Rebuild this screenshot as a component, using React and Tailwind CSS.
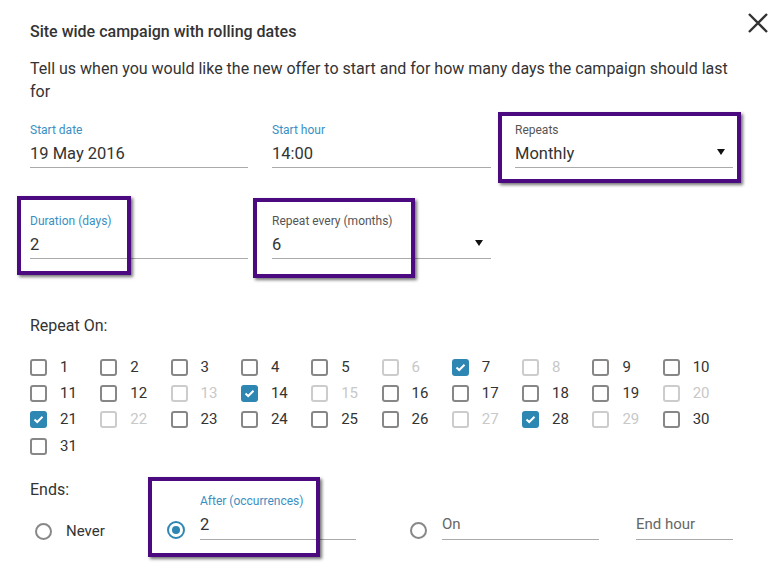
import React from "react";

const font = { fontFamily: "Roboto, 'Liberation Sans', sans-serif" };

// caja morada de anotación
function Marca({ className }) {
  return (
    <div
      className={`absolute border-4 border-[#4b0a80] shadow-[2px_2px_3px_rgba(0,0,0,0.55)] pointer-events-none ${className}`}
    />
  );
}

function Triangulo() {
  return (
    <svg width="8" height="6" viewBox="0 0 8 6" className="absolute right-[8px] top-[27px]">
      <path d="M0 0 H8 L4 6 Z" fill="#111" />
    </svg>
  );
}

function Campo({ label, valor, azul, select, className = "" }) {
  return (
    <div className={`relative shrink-0 ${className}`}>
      <div className={`text-[12px] leading-4 ${azul ? "text-[#3a8fc2]" : "text-[#555]"}`}>
        {label}
      </div>
      <div className="mt-[5px] text-[16.5px] leading-[22px] pb-[2px] text-[#333] border-b border-[#aaa]">
        {valor}
      </div>
      {select && <Triangulo />}
    </div>
  );
}

function Check({ n, estado }) {
  const off = estado === "off";
  const on = estado === "on";
  return (
    <div className="flex items-center h-[26.3px]">
      {on ? (
        <div className="w-[17px] h-[17px] rounded-[3px] bg-[#2e86b2] flex items-center justify-center">
          <svg width="11" height="9" viewBox="0 0 11 9">
            <path d="M1.5 4.5 L4.2 7 L9.5 1.8" stroke="white" strokeWidth="2" fill="none" />
          </svg>
        </div>
      ) : (
        <div className={`w-[17px] h-[17px] rounded-[3px] border-2 ${off ? "border-[#ccc]" : "border-[#878787]"}`} />
      )}
      <span className={`ml-[13px] text-[15px] ${off ? "text-[#c8c8c8]" : "text-[#333]"}`}>{n}</span>
    </div>
  );
}

function Radio({ activo }) {
  return activo ? (
    <div className="w-[18px] h-[18px] rounded-full border-2 border-[#2e86b2] flex items-center justify-center shrink-0">
      <div className="w-[8px] h-[8px] rounded-full bg-[#2e86b2]" />
    </div>
  ) : (
    <div className="w-[17px] h-[17px] rounded-full border-2 border-[#888] shrink-0" />
  );
}

const desactivados = [6, 8, 13, 15, 20, 22, 27, 29];
const marcados = [7, 14, 21, 28];

export default function App() {
  const dias = Array.from({ length: 31 }, (_, i) => i + 1);

  return (
    <div className="relative w-[771px] h-[573px] bg-white overflow-hidden" style={font}>
      {/* cerrar */}
      <svg width="22" height="22" viewBox="0 0 22 22" className="absolute left-[747px] top-[12px]">
        <path d="M2 2 L20 20 M20 2 L2 20" stroke="#333" strokeWidth="2.4" />
      </svg>

      <div className="px-[30px] pt-[22px] w-[763px]">
        <h2 className="text-[16px] leading-5 font-medium text-[#333]">
          Site wide campaign with rolling dates
        </h2>
        <p className="mt-[15px] text-[16px] leading-[23px] text-[#333]">
          Tell us when you would like the new offer to start and for how many days the campaign should last for
        </p>

        {/* fila 1 */}
        <div className="mt-[19px] flex gap-[24px]">
          <Campo className="w-[218px]" label="Start date" valor="19 May 2016" azul />
          <Campo className="w-[219px]" label="Start hour" valor="14:00" azul />
          <Campo className="w-[218px]" label="Repeats" valor="Monthly" select />
        </div>

        {/* fila 2 */}
        <div className="mt-[45px] flex gap-[24px]">
          <Campo className="w-[218px]" label="Duration (days)" valor="2" azul />
          <Campo className="w-[219px]" label="Repeat every (months)" valor="6" select />
        </div>

        <div className="mt-[57px] text-[16px] leading-5 text-[#333]">Repeat On:</div>

        <div className="mt-[18px] grid grid-cols-10 w-[703px]">
          {dias.map((n) => (
            <Check
              key={n}
              n={n}
              estado={marcados.includes(n) ? "on" : desactivados.includes(n) ? "off" : "normal"}
            />
          ))}
        </div>

        <div className="mt-[21px] text-[16px] leading-5 text-[#333]">Ends:</div>

        <div className="mt-[-7px] flex items-end">
          <div className="w-[137px] shrink-0 flex items-center pl-[5px] h-[22px] mb-[-2px]">
            <Radio />
            <span className="ml-[14px] text-[15px] text-[#333]">Never</span>
          </div>
          <div className="w-[189px] shrink-0 flex items-end">
            <div className="mb-[1px]"><Radio activo /></div>
            <div className="ml-[15px] w-[156px]">
              <div className="text-[12px] leading-4 text-[#3a8fc2]">After (occurrences)</div>
              <div className="mt-[5px] text-[16.5px] leading-[22px] pb-[3px] text-[#333] border-b border-[#aaa]">2</div>
            </div>
          </div>
          <div className="ml-[54px] w-[189px] shrink-0 flex items-end">
            <div className="mb-[1px]"><Radio /></div>
            <div className="ml-[15px] w-[157px] text-[15px] leading-[22px] pb-[4px] text-[#666] border-b border-[#aaa]">On</div>
          </div>
          <div className="ml-[37px] w-[97px] shrink-0 text-[15px] leading-[22px] pb-[4px] text-[#666] border-b border-[#aaa]">
            End hour
          </div>
        </div>
      </div>

      {/* anotaciones */}
      <Marca className="left-[498px] top-[112px] w-[243px] h-[71px]" />
      <Marca className="left-[17px] top-[196px] w-[114px] h-[79px]" />
      <Marca className="left-[253px] top-[198px] w-[162px] h-[80px]" />
      <Marca className="left-[148px] top-[477px] w-[172px] h-[80px]" />
    </div>
  );
}
